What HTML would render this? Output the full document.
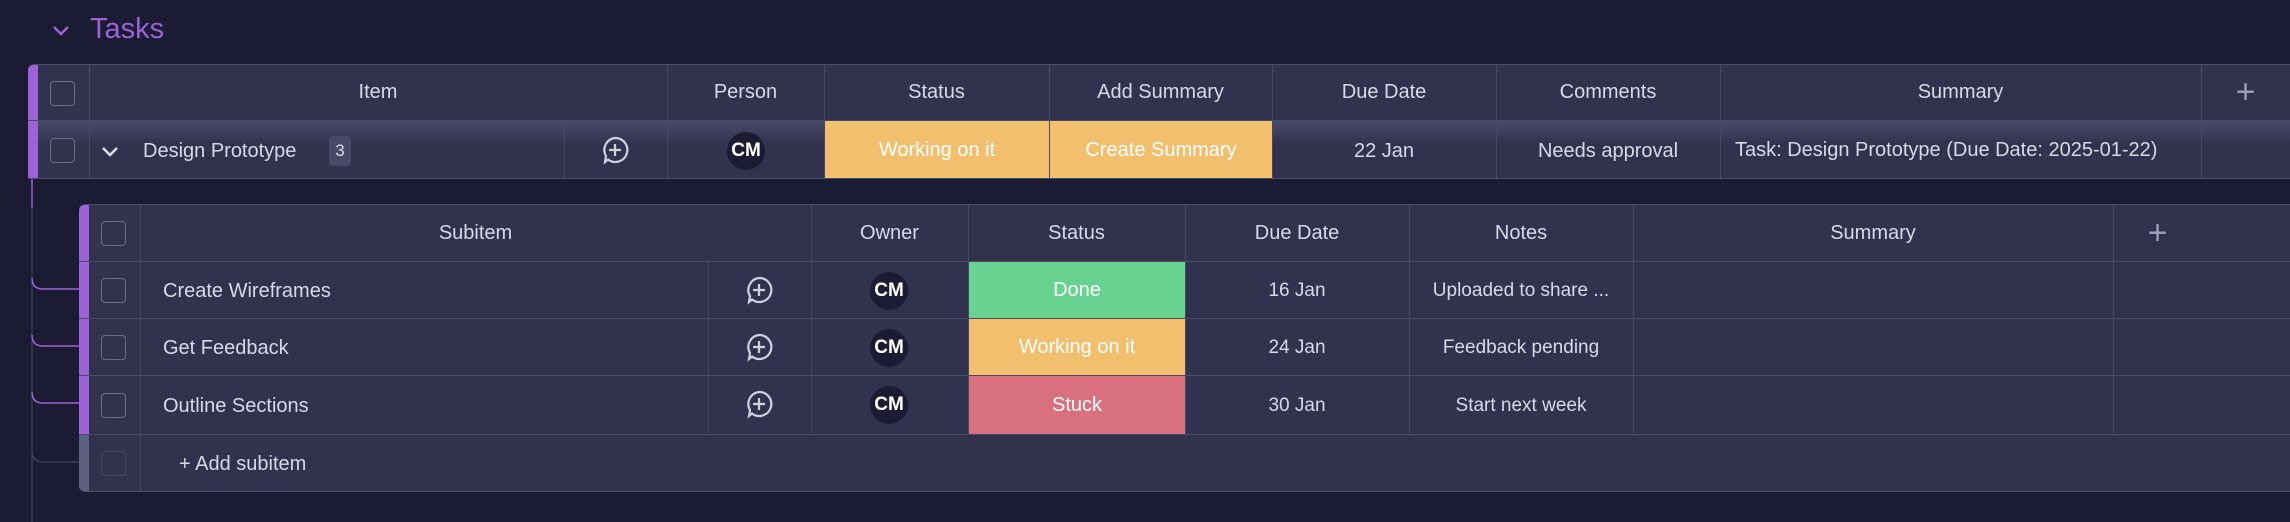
<!DOCTYPE html><html><head><style>
body{margin:0;width:2290px;height:522px;background:#1b1c33;font-family:"Liberation Sans",sans-serif;color:#d8d9e6;overflow:hidden;position:relative}
.a{position:absolute;box-sizing:border-box}
.c{display:flex;align-items:center;justify-content:center;font-size:20px}
.t{display:flex;align-items:center;font-size:20px;height:56px}
.tb{background:#30324e;border-top:1px solid #4a4c68;border-bottom:1px solid #4a4c68}
.vl{position:absolute;top:0;bottom:0;width:1px;background:#474966}
.hl{position:absolute;left:0;right:0;height:1px;background:#4a4c68}
.cb{position:absolute;width:25px;height:25px;border:1.5px solid #6b6d88;border-radius:4px;box-sizing:border-box}
.av{width:38px;height:38px;border-radius:50%;background:#1b1c33;color:#fff;font-weight:bold;font-size:19px;display:flex;align-items:center;justify-content:center}
</style></head><body>
<svg class="a" style="left:50px;top:21px" width="22" height="18"><path d="M4 6 L11 13 L18 6" stroke="#9b63d6" stroke-width="2.5" fill="none"/></svg>
<div class="a" style="left:90px;top:13px;font-size:29px;color:#9b63d6">Tasks</div>

<svg class="a" style="left:0;top:178px" width="90" height="344">
<path d="M32 0 V344" stroke="#474966" stroke-width="1" fill="none"/>
<path d="M32 0 V30" stroke="#9b63d6" stroke-width="1.5"/>
<path d="M32 100 Q32 111 43 111 H80 M32 157 Q32 168 43 168 H80 M32 214 Q32 225 43 225 H80" stroke="#9b63d6" stroke-width="1.5" fill="none"/>
<path d="M32 273 Q32 284 43 284 H80" stroke="#3a3b58" stroke-width="1.5" fill="none"/>
</svg>

<div class="a tb" style="left:28px;top:64px;width:2262px;height:115px;border-radius:6px 0 0 0;overflow:hidden">
<div class="a" style="left:0;top:0;width:10px;height:115px;background:#9b63d6"></div>
<div class="a" style="left:10px;top:55px;right:0;height:60px;background:linear-gradient(#4a4c6a,#30324e 40%)"></div>
<div class="hl" style="top:55px"></div>
<div class="vl" style="left:61px"></div><div class="vl" style="left:639px"></div><div class="vl" style="left:796px"></div><div class="vl" style="left:1021px"></div><div class="vl" style="left:1244px"></div><div class="vl" style="left:1468px"></div><div class="vl" style="left:1692px"></div><div class="vl" style="left:2173px"></div>
<div class="vl" style="left:536px;top:56px"></div>
<div class="cb" style="left:22px;top:16px"></div><div class="cb" style="left:22px;top:73px"></div>
<div class="a c" style="left:61px;top:0;width:578px;height:55px">Item</div>
<div class="a c" style="left:639px;top:0;width:157px;height:55px">Person</div>
<div class="a c" style="left:796px;top:0;width:225px;height:55px">Status</div>
<div class="a c" style="left:1021px;top:0;width:223px;height:55px">Add Summary</div>
<div class="a c" style="left:1244px;top:0;width:224px;height:55px">Due Date</div>
<div class="a c" style="left:1468px;top:0;width:224px;height:55px">Comments</div>
<div class="a c" style="left:1692px;top:0;width:481px;height:55px">Summary</div>
<div class="a c" style="left:2173px;top:0;width:89px;height:55px;font-size:34px;color:#9a9cb4">+</div>
<svg class="a" style="left:72px;top:79px" width="20" height="16"><path d="M3 4 L10 11 L17 4" stroke="#e0e0ea" stroke-width="2.5" fill="none"/></svg>
<div class="a t" style="left:115px;top:58px">Design Prototype</div>
<div class="a c" style="left:301px;top:71px;width:22px;height:30px;background:#474966;border-radius:4px;font-size:17px">3</div>
<svg class="a" style="left:572px;top:70px" width="30" height="30" viewBox="0 0 30 30"><path d="M15 3 A12 12 0 1 1 8 24.5 L5 27 L6 21 A12 12 0 0 1 15 3 Z M15 9 V21 M9 15 H21" stroke="#d0d1dd" stroke-width="2.2" fill="none"/></svg>
<div class="a" style="left:699px;top:67px"><div class="av">CM</div></div>
<div class="a c" style="left:797px;top:56px;width:224px;height:58px;background:#f2bf6e;color:#fff">Working on it</div>
<div class="a c" style="left:1022px;top:56px;width:222px;height:58px;background:#f2bf6e;color:#fff">Create Summary</div>
<div class="a c" style="left:1244px;top:57px;width:224px;height:58px">22 Jan</div>
<div class="a c" style="left:1468px;top:57px;width:224px;height:58px">Needs approval</div>
<div class="a t" style="left:1707px;top:57px">Task: Design Prototype (Due Date: 2025-01-22)</div>
</div>

<div class="a tb" style="left:79px;top:204px;width:2211px;height:288px;border-radius:6px 0 0 6px;overflow:hidden">
<div class="a" style="left:0;top:0;width:10px;height:230px;background:#9b63d6"></div>
<div class="a" style="left:0;top:230px;width:10px;height:58px;background:#5e6080"></div>
<div class="hl" style="top:56px"></div><div class="hl" style="top:113px"></div><div class="hl" style="top:170px"></div><div class="hl" style="top:229px"></div>
<div class="vl" style="left:61px"></div>
<div class="vl" style="left:732px;bottom:58px"></div><div class="vl" style="left:889px;bottom:58px"></div><div class="vl" style="left:1106px;bottom:58px"></div><div class="vl" style="left:1330px;bottom:58px"></div><div class="vl" style="left:1554px;bottom:58px"></div><div class="vl" style="left:2034px;bottom:58px"></div>
<div class="vl" style="left:629px;top:57px;bottom:58px"></div>
<div class="cb" style="left:22px;top:16px"></div><div class="cb" style="left:22px;top:73px"></div><div class="cb" style="left:22px;top:130px"></div><div class="cb" style="left:22px;top:188px"></div><div class="cb" style="left:22px;top:246px;border-color:#45475f"></div>
<div class="a c" style="left:61px;top:0;width:671px;height:56px">Subitem</div>
<div class="a c" style="left:732px;top:0;width:157px;height:56px">Owner</div>
<div class="a c" style="left:889px;top:0;width:217px;height:56px">Status</div>
<div class="a c" style="left:1106px;top:0;width:224px;height:56px">Due Date</div>
<div class="a c" style="left:1330px;top:0;width:224px;height:56px">Notes</div>
<div class="a c" style="left:1554px;top:0;width:480px;height:56px">Summary</div>
<div class="a c" style="left:2034px;top:0;width:89px;height:56px;font-size:34px;color:#9a9cb4">+</div>

<div class="a t" style="left:84px;top:58px">Create Wireframes</div>
<div class="a t" style="left:84px;top:115px">Get Feedback</div>
<div class="a t" style="left:84px;top:173px">Outline Sections</div>
<div class="a t" style="left:100px;top:231px">+ Add subitem</div>

<svg class="a" style="left:665px;top:70px" width="30" height="30" viewBox="0 0 30 30"><path d="M15 3 A12 12 0 1 1 8 24.5 L5 27 L6 21 A12 12 0 0 1 15 3 Z M15 9 V21 M9 15 H21" stroke="#d0d1dd" stroke-width="2.2" fill="none"/></svg>
<svg class="a" style="left:665px;top:127px" width="30" height="30" viewBox="0 0 30 30"><path d="M15 3 A12 12 0 1 1 8 24.5 L5 27 L6 21 A12 12 0 0 1 15 3 Z M15 9 V21 M9 15 H21" stroke="#d0d1dd" stroke-width="2.2" fill="none"/></svg>
<svg class="a" style="left:665px;top:184px" width="30" height="30" viewBox="0 0 30 30"><path d="M15 3 A12 12 0 1 1 8 24.5 L5 27 L6 21 A12 12 0 0 1 15 3 Z M15 9 V21 M9 15 H21" stroke="#d0d1dd" stroke-width="2.2" fill="none"/></svg>
<div class="a" style="left:791px;top:67px"><div class="av">CM</div></div>
<div class="a" style="left:791px;top:124px"><div class="av">CM</div></div>
<div class="a" style="left:791px;top:181px"><div class="av">CM</div></div>

<div class="a c" style="left:890px;top:57px;width:216px;height:56px;background:#68d391;color:#fff">Done</div>
<div class="a c" style="left:890px;top:114px;width:216px;height:56px;background:#f2bf6e;color:#fff">Working on it</div>
<div class="a c" style="left:890px;top:171px;width:216px;height:58px;background:#d9707e;color:#fff">Stuck</div>
<div class="a c" style="left:1106px;top:58px;width:224px;height:56px;font-size:19px">16 Jan</div>
<div class="a c" style="left:1106px;top:115px;width:224px;height:56px;font-size:19px">24 Jan</div>
<div class="a c" style="left:1106px;top:172px;width:224px;height:58px;font-size:19px">30 Jan</div>
<div class="a c" style="left:1330px;top:58px;width:224px;height:56px;font-size:19px">Uploaded to share ...</div>
<div class="a c" style="left:1330px;top:115px;width:224px;height:56px;font-size:19px">Feedback pending</div>
<div class="a c" style="left:1330px;top:172px;width:224px;height:58px;font-size:19px">Start next week</div>
</div>
</body></html>
